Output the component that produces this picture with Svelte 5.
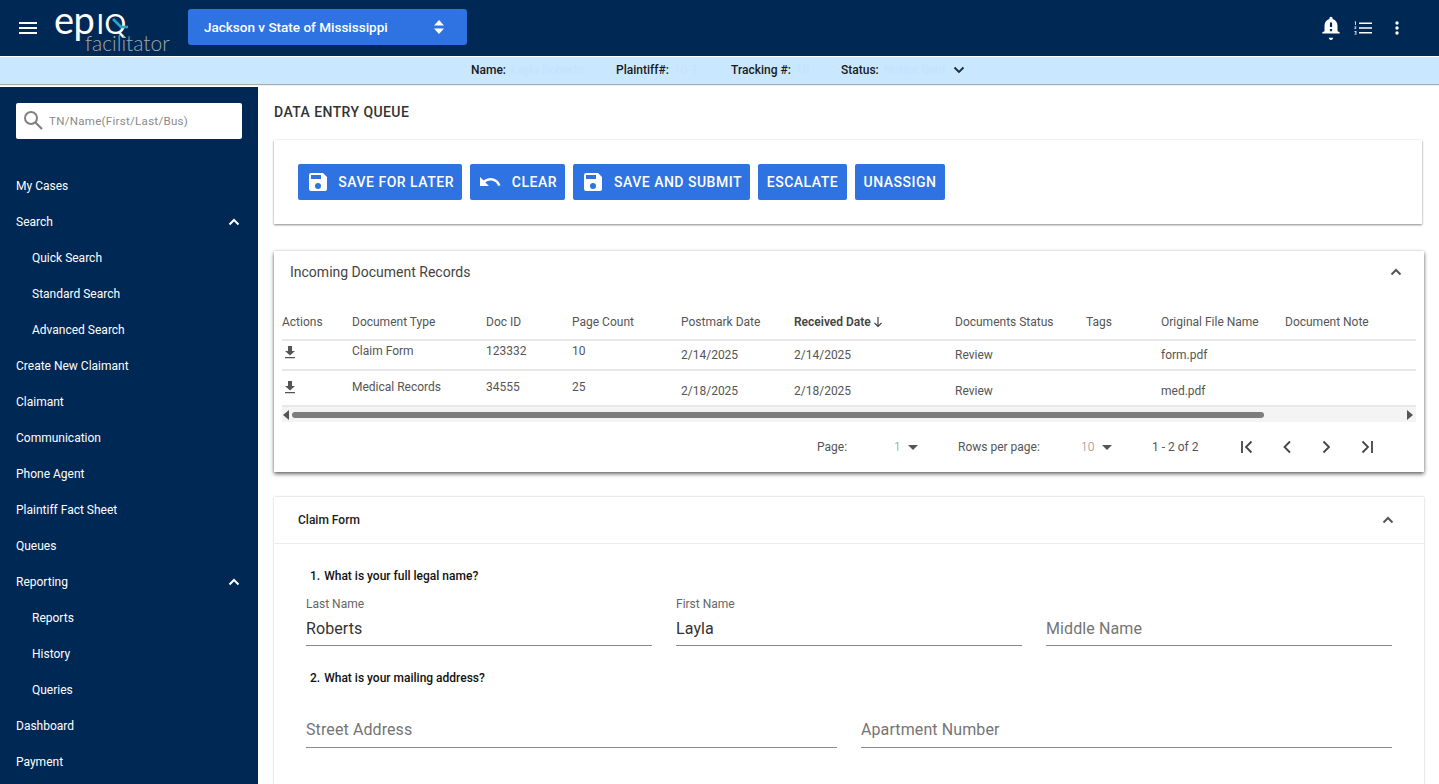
<script>
  const nav = [
    { t: 'My Cases' }, { t: 'Search', open: true }, { t: 'Quick Search', sub: true }, { t: 'Standard Search', sub: true },
    { t: 'Advanced Search', sub: true }, { t: 'Create New Claimant' }, { t: 'Claimant' }, { t: 'Communication' },
    { t: 'Phone Agent' }, { t: 'Plaintiff Fact Sheet' }, { t: 'Queues' }, { t: 'Reporting', open: true },
    { t: 'Reports', sub: true }, { t: 'History', sub: true }, { t: 'Queries', sub: true }, { t: 'Dashboard' }, { t: 'Payment' }
  ];
  const heads = ['Actions', 'Document Type', 'Doc ID', 'Page Count', 'Postmark Date', 'Received Date', 'Documents Status', 'Tags', 'Original File Name', 'Document Note'];
  const rows = [
    ['Claim Form', '123332', '10', '2/14/2025', '2/14/2025', 'Review', '', 'form.pdf', ''],
    ['Medical Records', '34555', '25', '2/18/2025', '2/18/2025', 'Review', '', 'med.pdf', '']
  ];
  const save = 'M17 3H5a2 2 0 0 0-2 2v14a2 2 0 0 0 2 2h14a2 2 0 0 0 2-2V7l-4-4zm-5 16a3 3 0 1 1 0-6 3 3 0 0 1 0 6zm3-10H5V5h10v4z';
  const undo = 'M12.5 8c-2.65 0-5.05.99-6.9 2.6L2 7v9h9l-3.62-3.62c1.39-1.16 3.16-1.88 5.12-1.88 3.54 0 6.55 2.31 7.6 5.5l2.37-.78C21.08 11.03 17.15 8 12.5 8z';
  const buttons = [
    { t: 'Save for later', i: save, w: 164 }, { t: 'Clear', i: undo, w: 95 }, { t: 'Save and submit', i: save, w: 177 },
    { t: 'Escalate', w: 89 }, { t: 'Unassign', w: 90 }
  ];
  const pager = [
    'M16.5 6.5 11 12l5.5 5.5M7 6v12', 'M15 6.5 9.5 12l5.5 5.5', 'M8.5 6.5 14 12l-5.5 5.5', 'M7.5 6.5 13 12l-5.5 5.5M17 6v12'
  ];
</script>

<div class="page">
  <header class="top">
    <svg class="menu" viewBox="0 0 18 12" width="18" height="12"><path d="M0 0h18v2H0zM0 5h18v2H0zM0 10h18v2H0z" fill="#fff"/></svg>
    <div class="logo">
      <span class="epiq">ep<span class="caps">IQ</span></span>
      <svg class="tail" viewBox="0 0 16 11" width="16" height="11"><path d="M1 1l8 8h7" fill="none" stroke="#2aa6c8" stroke-width="2.600"/></svg>
      <span class="fac">facilitator</span>
    </div>
    <div class="case">
      <span>Jackson v State of Mississippi</span>
      <svg viewBox="0 0 10 14" width="10" height="14"><path d="M5 0l5 5.500H0zM5 14l5-5.500H0z" fill="#fff"/></svg>
    </div>
    <div class="tools">
      <svg class="bell" viewBox="0 0 24 24" width="26" height="26"><path fill="#fff" d="M12 23c1.100 0 2-.9 2-2h-4c0 1.100.9 2 2 2zm8-6v-1l-2-1v-5c0-3.100-1.600-5.600-4.500-6.300V3c0-.8-.7-1.500-1.500-1.500s-1.500.7-1.500 1.500v.7C7.600 4.400 6 6.900 6 10v5l-2 1v1zM13 15h-2v-2h2zm0-4h-2V7h2z"/></svg>
      <svg class="list" viewBox="0 0 18 14" width="18" height="14"><path fill="#fff" d="M5 1.500h13v1.500H5zM5 6.300h13v1.500H5zM5 11h13v1.500H5zM.7.500h1.300v3.400H1.200V1.200H.7zM.4 5.500h2v.6l-1.200 1.300h1.200v.7H.4v-.6l1.200-1.300H.4zM.4 10h2v3.400h-2v-.7h1.300v-.7H1v-.6h.7v-.7H.4z"/></svg>
      <svg class="dots" viewBox="0 0 4 14" width="4" height="14"><circle cx="2" cy="2" r="1.700" fill="#fff"/><circle cx="2" cy="7" r="1.700" fill="#fff"/><circle cx="2" cy="12" r="1.700" fill="#fff"/></svg>
    </div>
  </header>

  <div class="info">
    <span class="pair n"><b>Name:</b><i>Layla Roberts</i></span>
    <span class="pair p"><b>Plaintiff#:</b><i>10-1</i></span>
    <span class="pair t"><b>Tracking #:</b><i>10</i></span>
    <span class="pair s"><b>Status:</b><i>Notice Sent</i></span>
    <svg viewBox="0 0 12 8" width="12" height="8"><path d="M1.500 1.500 6 6l4.500-4.500" fill="none" stroke="#1d2a38" stroke-width="1.800"/></svg>
  </div>

  <div class="body">
    <aside class="side">
      <div class="search">
        <svg viewBox="0 0 20 20" width="20" height="20"><circle cx="8" cy="8" r="6" fill="none" stroke="#808080" stroke-width="2"/><path d="M12.500 12.500 19 19" stroke="#808080" stroke-width="2.200"/></svg>
        <span>TN/Name(First/Last/Bus)</span>
      </div>
      <nav>
        {#each nav as item}
          <div class="nav" class:sub={item.sub}>
            <span>{item.t}</span>
            {#if item.open}
              <svg viewBox="0 0 12 8" width="12" height="8"><path d="M1.500 6.500 6 2l4.500 4.500" fill="none" stroke="#fff" stroke-width="2"/></svg>
            {/if}
          </div>
        {/each}
      </nav>
    </aside>

    <main class="main">
      <h1>DATA ENTRY QUEUE</h1>

      <section class="card actions">
        {#each buttons as b}
          <button style="width:{b.w}px">
            {#if b.i}<svg viewBox="0 0 24 24" width="24" height="24"><path fill="#fff" d={b.i}/></svg>{/if}
            <span>{b.t}</span>
          </button>
        {/each}
      </section>

      <section class="card records">
        <div class="rec-head">
          <span>Incoming Document Records</span>
          <svg viewBox="0 0 12 8" width="12" height="8"><path d="M1.500 6.500 6 2l4.500 4.500" fill="none" stroke="#555" stroke-width="2"/></svg>
        </div>
        <div class="table">
          <div class="row head">
            {#each heads as h}
              <span class:strong={h === 'Received Date'}>{h}{#if h === 'Received Date'}<svg class="sort" viewBox="0 0 10 12" width="10" height="12"><path d="M5 1v9.500M1.500 7 5 10.500 8.500 7" fill="none" stroke="#444" stroke-width="1.200"/></svg>{/if}</span>
            {/each}
          </div>
          {#each rows as r, ri}
            <div class="row item" class:tall={ri === 1}>
              <span class="early dl"><svg viewBox="0 0 12 14" width="12" height="14"><path fill="#555" d="M4 1h4v5h3L6 10.500 1 6h3zM1 12h10v1.300H1z"/></svg></span>
              {#each r as c, i}
                <span class:early={i < 3}>{c}</span>
              {/each}
            </div>
          {/each}
        </div>
        <div class="scrollbar">
          <svg viewBox="0 0 6 10" width="6" height="10"><path d="M6 0v10L0 5z" fill="#555"/></svg>
          <div class="track"><div class="thumb"></div></div>
          <svg viewBox="0 0 6 10" width="6" height="10"><path d="M0 0v10l6-5z" fill="#555"/></svg>
        </div>
        <div class="pager">
          <span class="pg-label">Page:</span>
          <span class="pg-val one">1</span><i class="caret"></i>
          <span class="pg-label rows">Rows per page:</span>
          <span class="pg-val ten">10</span><i class="caret"></i>
          <span class="pg-count">1 - 2 of 2</span>
          <div class="pg-btns">
            {#each pager as d}
              <svg viewBox="0 0 24 24" width="24" height="24"><path d={d} fill="none" stroke="#444" stroke-width="1.800"/></svg>
            {/each}
          </div>
        </div>
      </section>

      <section class="card form">
        <div class="form-head">
          <span>Claim Form</span>
          <svg viewBox="0 0 12 8" width="12" height="8"><path d="M1.500 6.500 6 2l4.500 4.500" fill="none" stroke="#555" stroke-width="2"/></svg>
        </div>
        <div class="form-body">
          <p class="q"><span class="num">1.</span>What is your full legal name?</p>
          <div class="fields three">
            <div class="field"><span class="label">Last Name</span><div class="val">Roberts</div></div>
            <div class="field"><span class="label">First Name</span><div class="val">Layla</div></div>
            <div class="field"><span class="label">&nbsp;</span><div class="val ph">Middle Name</div></div>
          </div>
          <p class="q two"><span class="num">2.</span>What is your mailing address?</p>
          <div class="fields dual">
            <div class="field"><span class="label">&nbsp;</span><div class="val ph">Street Address</div></div>
            <div class="field"><span class="label">&nbsp;</span><div class="val ph">Apartment Number</div></div>
          </div>
        </div>
      </section>
    </main>
  </div>
</div>

<style>
  :global(body) { margin: 0; overflow: hidden; background: #fff; }
  .page { width: 1439px; height: 784px; overflow: hidden; display: flex; flex-direction: column; font-family: Roboto, "Liberation Sans", sans-serif; color: #333; }
  svg { display: block; flex: none; }

  .top { height: 56px; flex: none; background: #002855; display: flex; align-items: center; padding-left: 19px; box-sizing: border-box; }
  .logo { position: relative; width: 130px; height: 56px; margin-left: 17px; flex: none; }
  .epiq { position: absolute; left: 0; top: 5px; font: 400 38px/28px Lato, sans-serif; color: #fff; letter-spacing: -.5px; white-space: nowrap; }
  .caps { font-size: 27px; margin-left: 2px; letter-spacing: .5px; }
  .tail { position: absolute; left: 58px; top: 18px; }
  .fac { position: absolute; left: 31px; top: 33px; font: 300 21px/20px Lato, sans-serif; color: #a5a7a9; }
  .case { width: 279px; height: 36px; margin: -2px 0 0 4px; background: #2f72e2; border-radius: 3px; display: flex; align-items: center; justify-content: space-between; padding: 0 23px 0 16px; box-sizing: border-box; color: #fff; font-size: 13.500px; font-weight: 500; }
  .tools { margin-left: auto; display: flex; align-items: center; padding-right: 40px; }
  .tools .list { margin-left: 10px; }
  .tools .dots { margin-left: 23px; }

  .info { height: 27px; margin-top: 1px; flex: none; background: #c9e7ff; box-shadow: 0 1px 1px #aaa; position: relative; font-size: 12px; z-index: 2; }
  .pair { position: absolute; top: 6px; white-space: nowrap; line-height: 14px; }
  .pair b { font-weight: 500; color: #1a1a1a; }
  .pair i { font-style: normal; color: #c4e3fc; margin-left: 5px; }
  .n { left: 471px; } .p { left: 616px; } .t { left: 731px; } .s { left: 841px; }
  .info svg { position: absolute; left: 953px; top: 9px; }

  .body { flex: 1; display: flex; min-height: 0; margin-top: 1px; }
  .side { width: 258px; flex: none; background: #002855; margin-top: 2px; padding: 16px 16px 0; box-sizing: border-box; color: #fff; }
  .search { height: 36px; width: 226px; background: #fff; border-radius: 2px; display: flex; align-items: center; padding-left: 7px; box-sizing: border-box; color: #8a8a8a; font-size: 11.500px; letter-spacing: .3px; gap: 6px; }
  .search svg { margin-top: -2px; }
  nav { margin-top: 29px; }
  .nav { height: 36px; display: flex; align-items: center; justify-content: space-between; font-size: 12px; padding-right: 2px; }
  .nav.sub { padding-left: 16px; }

  .main { flex: 1; min-width: 0; padding: 0 15px 0 16px; }
  h1 { margin: 19px 0 0; font-size: 14px; font-weight: 500; line-height: 16px; color: #333; letter-spacing: .42px; }
  .card { background: #fff; }
  .actions { margin-top: 20px; margin-right: 2px; height: 84px; padding: 24px; box-sizing: border-box; display: flex; gap: 8px; box-shadow: 0 1px 2px rgba(0,0,0,.45), 0 0 2px rgba(0,0,0,.08); }
  button { height: 36px; border: 0; border-radius: 2px; background: #2f72e2; color: #fff; font: 500 14px Roboto, sans-serif; text-transform: uppercase; padding: 0 8px; display: flex; align-items: center; justify-content: space-between; letter-spacing: .5px; white-space: nowrap; box-sizing: border-box; }
  button:nth-child(4), button:nth-child(5) { justify-content: center; }

  .records { margin-top: 27px; height: 221px; box-shadow: 0 2px 4px rgba(0,0,0,.6), 0 0 2px rgba(0,0,0,.12); padding: 0 8px; box-sizing: border-box; display: flex; flex-direction: column; }
  .rec-head { height: 42px; display: flex; align-items: center; justify-content: space-between; padding: 0 14px 0 8px; font-size: 14px; color: #444; flex: none; }
  .table { margin-top: 19px; font-size: 12px; color: #555; }
  .row { display: grid; grid-template-columns: 70px 134px 86px 109px 113px 161px 131px 75px 124px 1fr; border-bottom: 2px solid #e8e8e8; }
  .row span { white-space: nowrap; }
  .head { height: 27px; line-height: 21px; }
  .strong { font-weight: 600; color: #444; display: flex; gap: 2px; align-items: flex-start; }
  .sort { margin-top: 4px; }
  .item { height: 30px; line-height: 14px; padding-top: 7px; box-sizing: border-box; }
  .item.tall { height: 36px; padding-top: 13px; }
  .item .early { margin-top: -4px; }
  .item .dl { padding-left: 2px; margin-top: -3px; }
  .item.tall .dl { margin-top: -4px; }
  .scrollbar { height: 15px; flex: none; background: #f4f4f4; display: flex; align-items: center; padding: 0 3px 0 1px; box-sizing: border-box; gap: 1px; }
  .track { flex: 1; }
  .thumb { height: 6px; width: 972px; margin-left: 2px; background: #7d7d7d; border-radius: 3px; }
  .pager { flex: 1; position: relative; font-size: 12px; color: #555; }
  .pager > * { position: absolute; top: 18px; line-height: 14px; }
  .pg-label { left: 535px; }
  .pg-label.rows { left: 676px; }
  .pg-val { color: #888; font-weight: 300; }
  .one { left: 612px; }
  .ten { left: 799px; }
  .caret { width: 0; height: 0; border: 5px solid transparent; border-top: 5px solid #555; border-bottom: 0; top: 23px; }
  .one + .caret { left: 626px; }
  .ten + .caret { left: 820px; }
  .pg-count { left: 870px; }
  .pager .pg-btns { left: 953px; top: 13px; display: flex; gap: 16px; }

  .form { margin-top: 25px; height: 400px; box-shadow: 0 0 2px rgba(0,0,0,.25); }
  .form-head { height: 47px; display: flex; align-items: center; justify-content: space-between; padding: 0 30px 0 24px; border-bottom: 1px solid #ececec; font-size: 12px; font-weight: 500; color: #1a1a1a; box-sizing: border-box; }
  .form-body { padding: 0 32px; }
  .q { margin: 25px 0 0 4px; font-size: 12px; line-height: 14px; font-weight: 500; color: #111; }
  .q.two { margin-top: 25px; }
  .num { margin-right: 4px; }
  .fields { display: grid; gap: 24px; margin-top: 14px; }
  .three { grid-template-columns: repeat(3, 1fr); }
  .dual { grid-template-columns: repeat(2, 1fr); }
  .label { display: block; font-size: 12px; line-height: 14px; color: #666; }
  .val { height: 35px; border-bottom: 1px solid #8a8a8a; font-size: 16px; line-height: 34px; color: #333; box-sizing: border-box; letter-spacing: .1px; }
  .three .val { line-height: 36px; }
  .val.ph { color: #757575; }
</style>
